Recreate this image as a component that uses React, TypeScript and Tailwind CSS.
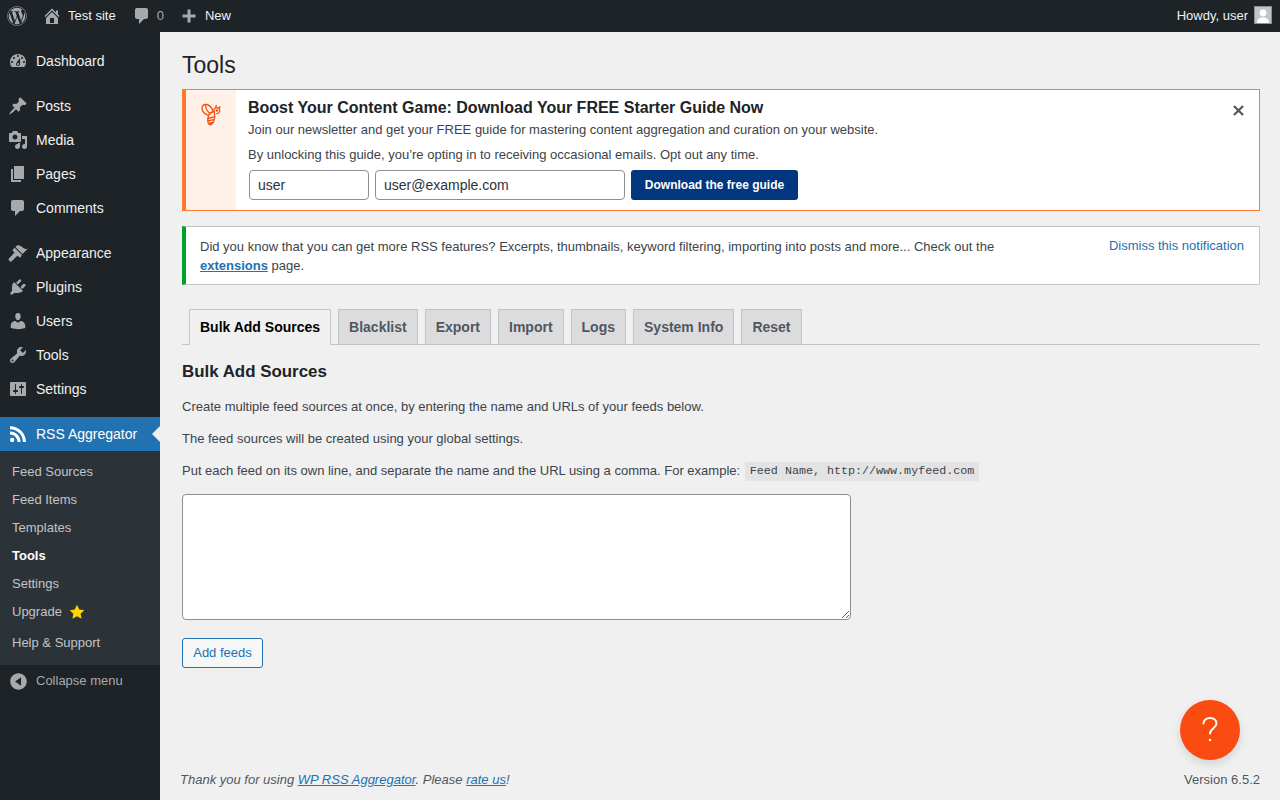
import React from 'react'
import { FaWordpress } from 'react-icons/fa'

// Dashicons paths, 20x20 grid
const icons: Record<string, string> = {
  dashboard: 'M3.76 16h12.48c1.1-1.37 1.76-3.11 1.76-5 0-4.42-3.58-8-8-8s-8 3.58-8 8c0 1.89.66 3.63 1.76 5zM10 4c.55 0 1 .45 1 1s-.45 1-1 1-1-.45-1-1 .45-1 1-1zM6 6c.55 0 1 .45 1 1s-.45 1-1 1-1-.45-1-1 .45-1 1-1zm8 0c.55 0 1 .45 1 1s-.45 1-1 1-1-.45-1-1 .45-1 1-1zm-5.37 5.55L12 7v6c0 1.1-.9 2-2 2s-2-.9-2-2c0-.57.24-1.08.63-1.45zM4 10c.55 0 1 .45 1 1s-.45 1-1 1-1-.45-1-1 .45-1 1-1zm12 0c.55 0 1 .45 1 1s-.45 1-1 1-1-.45-1-1 .45-1 1-1zm-5 3c0-.55-.45-1-1-1s-1 .45-1 1 .45 1 1 1 1-.45 1-1z',
  posts: 'M10.44 3.02l1.82-1.82 6.36 6.35-1.83 1.82c-1.05-.68-2.48-.57-3.41.36l-.75.75c-.92.93-1.04 2.35-.35 3.41l-1.83 1.82-2.41-2.41-2.8 2.79c-.42.42-3.38 2.71-3.8 2.29s1.86-3.39 2.28-3.81l2.79-2.79L4.1 9.36l1.83-1.82c1.05.69 2.48.57 3.4-.36l.75-.75c.93-.92 1.05-2.35.36-3.41z',
  media: 'M13 11V4c0-.55-.45-1-1-1h-1.67L9 1H5L3.67 3H2c-.55 0-1 .45-1 1v7c0 .55.45 1 1 1h10c.55 0 1-.45 1-1zM7 4.5c1.38 0 2.5 1.12 2.5 2.5S8.38 9.5 7 9.5 4.5 8.38 4.5 7 5.62 4.5 7 4.5zM14 6h5v10.5c0 1.38-1.12 2.5-2.5 2.5S14 17.88 14 16.5s1.12-2.5 2.5-2.5c.17 0 .34.02.5.05V9h-3V6zm-4 8.05V13h2v3.5c0 1.38-1.12 2.5-2.5 2.5S7 17.88 7 16.5 8.12 14 9.5 14c.17 0 .34.02.5.05z',
  pages: 'M6 15V2h10v13H6zm-1 1h8v2H3V5h2v11z',
  comments: 'M5 2h9c1.1 0 2 .9 2 2v7c0 1.1-.9 2-2 2h-2l-5 5v-5H5c-1.1 0-2-.9-2-2V4c0-1.1.9-2 2-2z',
  appearance: 'M14.48 11.06L7.41 3.99l1.5-1.5c.5-.56 2.3-.47 3.51.32 1.21.8 1.43 1.28 2.91 2.1 1.18.64 2.45 1.26 4.45.85zm-.71.71L6.7 4.7 4.93 6.47c-.39.39-.39 1.02 0 1.41l1.06 1.06c.39.39.39 1.03 0 1.42-.6.6-5.06 5.06-5.06 5.06-.51.51-.51 1.35 0 1.86l.99.99c.51.51 1.35.51 1.86 0 0 0 4.46-4.46 5.06-5.06.39-.39 1.03-.39 1.42 0l1.06 1.06c.39.39 1.02.39 1.41 0z',
  plugins: 'M13.11 4.36L9.87 7.6 8 5.73l3.24-3.24c.35-.34 1.05-.2 1.56.32.52.51.66 1.21.31 1.55zm-8 1.77l.91-1.12 9.01 9.01-1.19.84c-.71.71-2.63 1.16-3.82 1.16H6.14L4.9 17.26c-.59.59-1.54.59-2.12 0-.59-.58-.59-1.53 0-2.12l1.24-1.24v-3.88c0-1.13.4-3.19 1.09-3.89zm7.26 3.97l3.24-3.24c.34-.35 1.04-.21 1.55.31.52.51.66 1.21.31 1.55l-3.24 3.25z',
  users: 'M10 9.25c-2.27 0-2.73-3.44-2.73-3.44C7 4.02 7.82 2 9.97 2c2.16 0 2.98 2.02 2.71 3.81 0 0-.41 3.44-2.68 3.44zm0 2.57L12.72 10c2.39 0 4.52 2.33 4.52 4.53v2.49s-3.65 1.13-7.24 1.13c-3.65 0-7.24-1.13-7.24-1.13v-2.49c0-2.25 1.94-4.48 4.47-4.48z',
  tools: 'M16.68 9.77c-1.34 1.34-3.3 1.67-4.95.99l-5.41 6.52c-.99.99-2.59.99-3.58 0s-.99-2.59 0-3.57l6.52-5.42c-.68-1.65-.35-3.61.99-4.95 1.28-1.28 3.12-1.62 4.72-1.06l-2.89 2.89 2.82 2.82 2.86-2.87c.53 1.58.18 3.39-1.08 4.65zM3.81 16.21c.4.39 1.04.39 1.43 0 .4-.4.4-1.04 0-1.43-.39-.4-1.03-.4-1.43 0-.39.39-.39 1.03 0 1.43z',
  settings: 'M18 16V4c0-.55-.45-1-1-1H3c-.55 0-1 .45-1 1v12c0 .55.45 1 1 1h14c.55 0 1-.45 1-1zM8 11h1c.55 0 1 .45 1 1s-.45 1-1 1H8v1.5c0 .28-.22.5-.5.5s-.5-.22-.5-.5V13H6c-.55 0-1-.45-1-1s.45-1 1-1h1V5.5c0-.28.22-.5.5-.5s.5.22.5.5V11zm5-2h-1c-.55 0-1-.45-1-1s.45-1 1-1h1V5.5c0-.28.22-.5.5-.5s.5.22.5.5V7h1c.55 0 1 .45 1 1s-.45 1-1 1h-1v5.5c0 .28-.22.5-.5.5s-.5-.22-.5-.5V9z',
  rss: 'M14.92 18H18C18 9.32 10.82 2.25 2 2.25v3.02c7.12 0 12.92 5.71 12.92 12.73zm-5.44 0h3.08C12.56 12.27 7.82 7.6 2 7.6v3.02c2 0 3.87.77 5.29 2.16C8.7 14.17 9.48 16.03 9.48 18zm-5.35-.02c1.17 0 2.13-.93 2.13-2.09 0-1.15-.96-2.09-2.13-2.09-1.18 0-2.13.94-2.13 2.09 0 1.16.95 2.09 2.13 2.09z',
  home: 'M16 8.5l1.53 1.53-1.06 1.06L10 4.62l-6.47 6.47-1.06-1.06L10 2.5l4 4v-2h2v4zm-6-2.46l6 5.99V18H4v-5.97zM12 17v-5H8v5h4z',
  plus: 'M16.5 8.5v3h-5v5h-3v-5h-5v-3h5v-5h3v5z',
  collapse: 'M10 .3c5.4 0 9.7 4.3 9.7 9.7s-4.3 9.7-9.7 9.7S.3 15.4.3 10 4.6.3 10 .3zM13 15V5l-7 5 7 5z',
}

const Dash = ({ name, className }: { name: string; className: string }) => (
  <svg viewBox="0 0 20 20" className={className} fill="currentColor">
    <path d={icons[name]} />
  </svg>
)

const MenuItem = ({ icon, label }: { icon: string; label: string }) => (
  <div className="flex h-[34px] items-center text-[14px] text-[#f0f0f1]">
    <div className="flex w-[36px] justify-center pr-[1px] text-[#a7aaad]">
      <Dash name={icon} className="h-5 w-5" />
    </div>
    <span>{label}</span>
  </div>
)

const subItems = ['Feed Sources', 'Feed Items', 'Templates', 'Tools', 'Settings']
const tabs = ['Blacklist', 'Export', 'Import', 'Logs', 'System Info', 'Reset']

const Bee = () => (
  <svg viewBox="0 0 20 24" className="h-[24px] w-[20px]" fill="none" stroke="#f4500f" strokeWidth="1.3" strokeLinecap="round" strokeLinejoin="round">
    <path d="M7.5 12.5C3.5 11 1 8 1 5 1 2.5 3 1 5.5 1.5c3 .6 5.5 3.5 6.5 6.5" />
    <path d="M4.5 2.5c.4 3.5 2 6 4.5 8" />
    <path d="M7.5 12.5c1-2 3-3.6 5.5-4 1 2.5 1 6-.2 9.5-.8 2.2-2 3.6-3.4 3.8-1.4.2-2.4-1.3-2.5-3.6-.1-2.2 0-4 .6-5.7z" />
    <path d="M7 15.5l6.2-1.6M7 18l5.6-1.4M8 20.5l3.6-1" />
    <path d="M13 8.5c-.5-2 .7-3.6 2.4-3.8 1.8-.2 3.2 1 3.3 2.7.1 1.7-1.3 3.1-3 3.2" />
    <path d="M15 4.6l.2-2.2M17.6 5.4l1.4-1.6" />
    <circle cx="15.8" cy="7.6" r=".6" fill="#f4500f" />
  </svg>
)

const App: React.FC = () => {
  return (
    <div className="flex h-[800px] w-[1280px] flex-col overflow-hidden bg-[#f0f0f1] font-['Liberation_Sans',Arial,sans-serif] text-[13px] text-[#3c434a]">
      {/* Admin bar */}
      <div className="flex h-8 shrink-0 items-center justify-between bg-[#1d2327] text-[13px] text-[#f0f0f1]">
        <div className="flex items-center">
          <FaWordpress className="ml-[7px] h-5 w-5 text-[#a7aaad]" />
          <Dash name="home" className="ml-[15px] h-5 w-5 text-[#a7aaad]" />
          <span className="ml-[6px]">Test site</span>
          <Dash name="comments" className="ml-[16px] h-5 w-5 text-[#a7aaad]" />
          <span className="ml-[5px] text-[#a7aaad]">0</span>
          <Dash name="plus" className="ml-[15px] h-5 w-5 text-[#a7aaad]" />
          <span className="ml-[6px]">New</span>
        </div>
        <div className="flex items-center pr-2">
          <span>Howdy, user</span>
          <div className="-mt-0.5 ml-[6px] h-[18px] w-[18px] overflow-hidden border border-[#8c8f94] bg-[#c4c4c4]">
            <svg viewBox="0 0 16 16" className="h-4 w-4" fill="#fff">
              <circle cx="8" cy="6" r="3.4" />
              <path d="M2 16c0-4 2.5-5.5 6-5.5s6 1.5 6 5.5z" />
            </svg>
          </div>
        </div>
      </div>

      <div className="flex min-h-0 flex-1">
        {/* Sidebar */}
        <div className="flex w-[160px] shrink-0 flex-col bg-[#1d2327] pt-3">
          <MenuItem icon="dashboard" label="Dashboard" />
          <div className="h-[11px]" />
          <MenuItem icon="posts" label="Posts" />
          <MenuItem icon="media" label="Media" />
          <MenuItem icon="pages" label="Pages" />
          <MenuItem icon="comments" label="Comments" />
          <div className="h-[11px]" />
          <MenuItem icon="appearance" label="Appearance" />
          <MenuItem icon="plugins" label="Plugins" />
          <MenuItem icon="users" label="Users" />
          <MenuItem icon="tools" label="Tools" />
          <MenuItem icon="settings" label="Settings" />
          <div className="h-[11px]" />
          <div className="relative flex h-[34px] items-center bg-[#2271b1] text-[14px] text-white">
            <div className="flex w-[36px] justify-center pr-[1px]">
              <Dash name="rss" className="h-5 w-5" />
            </div>
            <span>RSS Aggregator</span>
            <div className="absolute right-0 top-[9px] h-0 w-0 border-y-[8px] border-r-[8px] border-y-transparent border-r-[#f0f0f1]" />
          </div>
          <div className="flex h-[214px] flex-col bg-[#2c3338] pl-3 pt-[7px] text-[13px] text-[#c3c4c7]">
            {subItems.map(s => (
              <div key={s} className={`flex h-[28px] items-center ${s === 'Tools' ? 'font-semibold text-white' : ''}`}>{s}</div>
            ))}
            <div className="flex h-[28px] items-center gap-[7px]">
              Upgrade
              <svg viewBox="0 0 20 20" className="h-[16px] w-[16px]" fill="#ffd400">
                <path d="M10 1l2.8 5.9 6.4.8-4.7 4.4 1.2 6.4L10 15.4l-5.7 3.1 1.2-6.4L.8 7.7l6.4-.8z" />
              </svg>
            </div>
            <div className="mt-[3px] flex h-[28px] items-center">Help &amp; Support</div>
          </div>
          <div className="flex h-[32px] items-center text-[13px] text-[#a7aaad]">
            <div className="flex w-[36px] justify-center pl-[1px]">
              <Dash name="collapse" className="h-[17px] w-[17px]" />
            </div>
            <span className="-mt-px">Collapse menu</span>
          </div>
        </div>

        {/* Content */}
        <div className="relative flex min-w-0 flex-1 flex-col pl-[22px] pr-5">
          <h1 className="mt-[18px] h-[39px] text-[23px] leading-[30px] text-[#1d2327]">Tools</h1>

          <div className="flex h-[122px] border border-l-4 border-[#ff7a2f] bg-white">
            <div className="flex w-[50px] shrink-0 justify-center bg-[#fff0e8] pt-[13px]">
              <Bee />
            </div>
            <div className="relative flex-1 pl-3">
              <div className="pt-[8px] text-[16px] font-bold leading-[20px] text-[#1d2327]">
                Boost Your Content Game: Download Your FREE Starter Guide Now
              </div>
              <p className="mt-[2px] leading-[20px]">Join our newsletter and get your FREE guide for mastering content aggregation and curation on your website.</p>
              <p className="mt-[5px] leading-[20px]">By unlocking this guide, you’re opting in to receiving occasional emails. Opt out any time.</p>
              <div className="ml-px mt-[5px] flex gap-[6px]">
                <input readOnly value="user" className="h-[30px] w-[120px] rounded border border-[#8c8f94] bg-white px-2 text-[14px] text-[#2c3338]" />
                <input readOnly value="user@example.com" className="h-[30px] w-[250px] rounded border border-[#8c8f94] bg-white px-2 text-[14px] text-[#2c3338]" />
                <button className="h-[30px] w-[167px] rounded-[3px] bg-[#02367f] text-[12px] font-bold text-white">Download the free guide</button>
              </div>
              <svg viewBox="0 0 12 12" className="absolute right-[15px] top-[15px] h-[11px] w-[11px]" stroke="#50575e" strokeWidth="2.4">
                <path d="M1 1l10 10M11 1L1 11" />
              </svg>
            </div>
          </div>

          <div className="mt-[15px] flex h-[59px] justify-between border border-l-4 border-[#c3c4c7] border-l-[#00a32a] bg-white pl-[14px] pr-[15px] pt-[10px]">
            <p className="w-[830px] leading-[19px]">
              Did you know that you can get more RSS features? Excerpts, thumbnails, keyword filtering, importing into posts and more... Check out the{' '}
              <a className="font-bold text-[#2271b1] underline">extensions</a> page.
            </p>
            <a className="-mt-px leading-[19px] text-[#2271b1]">Dismiss this notification</a>
          </div>

          {/* Tabs */}
          <div className="mt-6 flex h-[36px] gap-[7px] border-b border-[#c3c4c7] pl-[7px] text-[14px] font-bold">
            <div className="flex h-[36px] items-center border border-b-0 border-[#c3c4c7] bg-[#f0f0f1] px-[10px] text-black">Bulk Add Sources</div>
            {tabs.map(t => (
              <div key={t} className="flex h-[35px] items-center border border-b-0 border-[#c3c4c7] bg-[#dcdcde] px-[10px] text-[#50575e]">{t}</div>
            ))}
          </div>

          <h2 className="mt-[16px] text-[16.9px] font-bold leading-[22px] text-[#1d2327]">Bulk Add Sources</h2>
          <p className="mt-[15px] leading-[18px]">Create multiple feed sources at once, by entering the name and URLs of your feeds below.</p>
          <p className="mt-[14px] leading-[18px]">The feed sources will be created using your global settings.</p>
          <p className="mt-[14px] flex h-[18px] items-center">
            Put each feed on its own line, and separate the name and the URL using a comma. For example:
            <code className="ml-[5px] bg-[#e3e3e3] px-[4.7px] py-[2px] font-['Liberation_Mono',monospace] text-[11.7px] leading-[15px] text-[#3c434a]">Feed Name, http://www.myfeed.com</code>
          </p>
          <textarea readOnly className="mt-[14px] block h-[126px] w-[669px] rounded border border-[#8c8f94] bg-white" />
          <button className="mt-[18px] h-[30px] w-[81px] rounded-[3px] border border-[#2271b1] bg-[#f6f7f7] text-[13px] text-[#2271b1]">Add feeds</button>

          <div className="mt-auto flex items-center justify-between pb-[11px] pl-0">
            <p className="-ml-[2px] italic text-[#50575e]">
              Thank you for using <a className="text-[#2271b1] underline">WP RSS Aggregator</a>. Please <a className="text-[#2271b1] underline">rate us</a>!
            </p>
            <span className="text-[#50575e]">Version 6.5.2</span>
          </div>

          {/* Help beacon */}
          <div className="absolute bottom-[40px] right-[40px] flex h-[60px] w-[60px] items-center justify-center rounded-full bg-[#fa4b10] shadow-[0_4px_10px_rgba(0,0,0,0.12)]">
            <svg viewBox="0 0 16 28" className="h-[28px] w-[16px]" fill="none" stroke="#fff" strokeWidth="2" strokeLinecap="round">
              <path d="M1.5 7.5C1.5 4 4.3 2 8 2s6.5 2.2 6.5 5.6c0 4.6-6.5 4.8-6.5 10" />
              <circle cx="8" cy="24" r="1.2" fill="#fff" stroke="none" />
            </svg>
          </div>
        </div>
      </div>
    </div>
  )
}

export default App
